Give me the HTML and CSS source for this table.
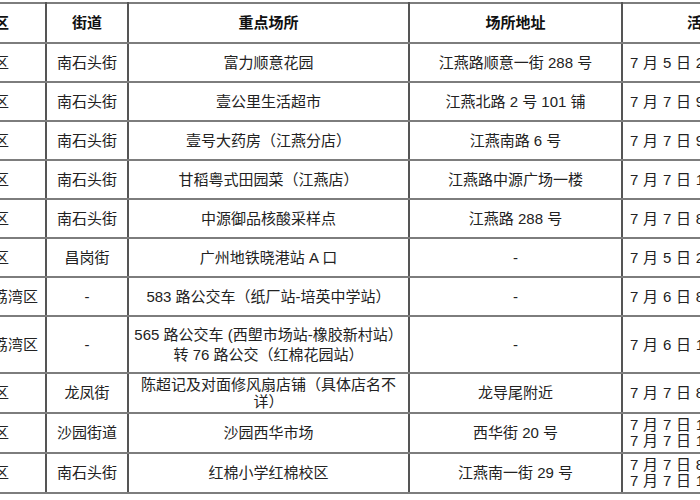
FILE: index.html
```html
<!DOCTYPE html>
<html lang="zh-CN">
<head>
<meta charset="utf-8">
<title>重点场所</title>
<link rel="stylesheet" href="styles.css">
</head>
<body>
<table class="grid">
  <colgroup>
    <col class="w1"><col class="w2"><col class="w3"><col class="w4"><col class="w5">
  </colgroup>
  <thead>
    <tr>
      <th class="dist">区</th>
      <th>街道</th>
      <th>重点场所</th>
      <th>场所地址</th>
      <th>活动时间</th>
    </tr>
  </thead>
  <tbody>
    <tr>
      <td class="dist">海珠区</td><td>南石头街</td><td>富力顺意花园</td><td>江燕路顺意一街 288 号</td><td class="time">7 月 5 日 20:30-21:30</td>
    </tr>
    <tr>
      <td class="dist">海珠区</td><td>南石头街</td><td>壹公里生活超市</td><td>江燕北路 2 号 101 铺</td><td class="time">7 月 7 日 9:00-9:30</td>
    </tr>
    <tr>
      <td class="dist">海珠区</td><td>南石头街</td><td>壹号大药房（江燕分店）</td><td>江燕南路 6 号</td><td class="time">7 月 7 日 9:30-10:00</td>
    </tr>
    <tr>
      <td class="dist">海珠区</td><td>南石头街</td><td>甘稻粤式田园菜（江燕店）</td><td>江燕路中源广场一楼</td><td class="time">7 月 7 日 12:00-13:00</td>
    </tr>
    <tr>
      <td class="dist">海珠区</td><td>南石头街</td><td>中源御品核酸采样点</td><td>江燕路 288 号</td><td class="time">7 月 7 日 8:00-8:30</td>
    </tr>
    <tr>
      <td class="dist">海珠区</td><td>昌岗街</td><td>广州地铁晓港站 A 口</td><td>-</td><td class="time">7 月 5 日 20:00-20:30</td>
    </tr>
    <tr>
      <td class="dist lw">荔湾区</td><td>-</td><td>583 路公交车（纸厂站-培英中学站）</td><td>-</td><td class="time">7 月 6 日 8:00-8:40</td>
    </tr>
    <tr class="tall">
      <td class="dist lw">荔湾区</td><td>-</td><td class="two">565 路公交车 (西塱市场站-橡胶新村站）<br>转 76 路公交（红棉花园站）</td><td>-</td><td class="time">7 月 6 日 17:00-18:00</td>
    </tr>
    <tr class="low">
      <td class="dist">海珠区</td><td>龙凤街</td><td class="tight">陈超记及对面修风扇店铺（具体店名不<br>详）</td><td>龙导尾附近</td><td class="time">7 月 7 日 8:30-9:00</td>
    </tr>
    <tr class="low">
      <td class="dist">海珠区</td><td>沙园街道</td><td>沙园西华市场</td><td>西华街 20 号</td><td class="time dual">7 月 7 日 10:00-10:30<br>7 月 7 日 17:00-17:30</td>
    </tr>
    <tr class="low">
      <td class="dist">海珠区</td><td>南石头街</td><td>红棉小学红棉校区</td><td>江燕南一街 29 号</td><td class="time dual">7 月 7 日 8:00-8:30<br>7 月 7 日 16:30-17:00</td>
    </tr>
  </tbody>
</table>
</body>
</html>
```

FILE: styles.css
```css
html, body {
  margin: 0;
  padding: 0;
  background: #ffffff;
}

body {
  width: 700px;
  height: 500px;
  overflow: hidden;
}

.grid {
  margin: 2px 0 0 -60px;
  border-collapse: collapse;
  table-layout: fixed;
  width: 871px;
  font-family: "Liberation Sans", "Noto Sans CJK SC", sans-serif;
  font-size: 15px;
  color: #222222;
}

.w1 { width: 105px; }
.w2 { width: 82px; }
.w3 { width: 281px; }
.w4 { width: 213px; }
.w5 { width: 190px; }

.grid th,
.grid td {
  border-left: 2px solid #555555;
  border-right: 2px solid #555555;
  border-top: 2px solid #7d7d7d;
  border-bottom: 2px solid #7d7d7d;
  padding: 0 4px;
  text-align: center;
  vertical-align: middle;
  white-space: nowrap;
  line-height: 18px;
}

.grid th {
  height: 38px;
  font-weight: bold;
  color: #111111;
}

.grid td {
  height: 37px;
}

.grid tr.tall td {
  height: 55px;
}

.grid tr.low td {
  height: 38px;
}

.grid .dist {
  text-align: right;
  padding-right: 36px;
}

.grid .dist.lw {
  padding-right: 7px;
}

.grid .two {
  line-height: 20px;
}

.grid .tight {
  line-height: 17px;
}

.grid .time {
  text-align: left;
  padding-left: 7px;
  letter-spacing: 0.3px;
}

.grid .dual {
  line-height: 16px;
}
```
